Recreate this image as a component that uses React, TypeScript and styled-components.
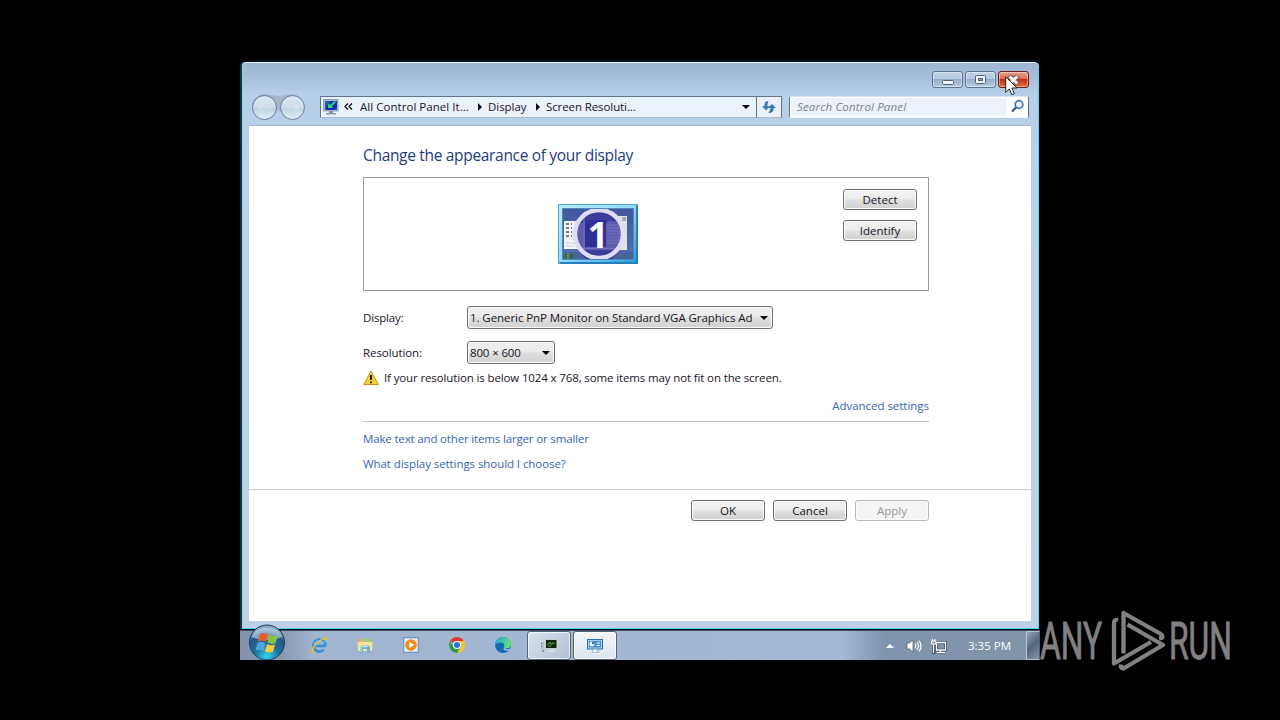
import { FC, ReactNode } from "react";
import styled, { createGlobalStyle } from "styled-components";

const GlobalStyle = createGlobalStyle`
  * { box-sizing: border-box; }
  body {
    margin: 0;
    background: #000;
    overflow: hidden;
    font-family: "Open Sans", "Noto Sans", sans-serif;
    font-size: 11.5px;
    color: #20141f;
  }
`;

const DisplayIcon: FC = () => (
  <svg width="16" height="16" viewBox="0 0 16 16">
    <rect x="0.5" y="0.5" width="14.5" height="11.5" fill="#a9bccb" stroke="#8fa3b2" />
    <rect x="2" y="2" width="12" height="9" fill="#0c2bc0" />
    <path d="M2 2h6L3 7v4h8l3-3v3H2z" fill="#175fb2" />
    <path d="M5 4v5h5L8.5 7.5 13 3l-1.5-1L7 6z" fill="#2edb4e" />
    <path d="M6 12h4v2h3v1.5H3V14h3z" fill="#8797a0" />
  </svg>
);

const Monitor: FC = () => (
  <svg width="80" height="60" viewBox="0 0 80 60">
    <defs>
      <linearGradient id="bezel" x1="0" y1="0" x2="1" y2="1">
        <stop offset="0" stopColor="#b4ecff" />
        <stop offset="0.5" stopColor="#93dbfc" />
        <stop offset="1" stopColor="#2b9de4" />
      </linearGradient>
      <linearGradient id="screen" x1="0" y1="0" x2="0" y2="1">
        <stop offset="0" stopColor="#4257a0" />
        <stop offset="1" stopColor="#5671ae" />
      </linearGradient>
      <clipPath id="screenClip">
        <rect x="5" y="5" width="70" height="50" />
      </clipPath>
    </defs>
    <rect width="80" height="60" rx="1" fill="#4aa5da" />
    <path d="M78 2h2v58H2v-2h76z" fill="#2580ba" />
    <rect x="1" y="1" width="77" height="57" fill="url(#bezel)" />
    <rect x="4" y="4" width="72" height="52" fill="#4f88b8" />
    <g clipPath="url(#screenClip)">
      <rect x="5" y="5" width="70" height="50" fill="url(#screen)" />
      <rect x="24" y="12" width="45" height="34" fill="#e0e2e4" />
      <path d="M64 13h4v4h-4z" fill="#a9a9b5" />
      <rect x="6" y="17" width="24" height="28" fill="#f3f4f4" />
      <path d="M8 20h3M8 24h3M8 28h3M8 32h3M13 20h1M13 24h1M13 28h1M13 32h1" stroke="#778" strokeWidth="2" />
      <path d="M8 39h10M8 42h8" stroke="#ccd" />
      <rect x="5" y="48" width="70" height="7" fill="#47639a" />
      <rect x="7" y="50" width="8" height="5" fill="#32684d" />
      <path d="M10 49v6" stroke="#b8a440" />
      <circle cx="41" cy="30" r="24" fill="#5f5cae" />
      <path d="M21 19a22 22 0 0 1 40 0zM21 46a22 22 0 0 0 40 0z" fill="#3d3c9a" />
      <rect x="27" y="16" width="21" height="27" fill="#302f96" />
      <path d="M49 18h13M49 21h13M49 24h14M49 27h14M49 30h14M49 33h14M49 36h13M49 39h12" stroke="#7770bf" />
      <path d="M26 14v30M24 44.500h34" stroke="#7770bf" />
      <circle cx="41" cy="30" r="24" fill="none" stroke="#dfddf3" strokeWidth="4.5" />
    </g>
    <text x="40" y="43.5" textAnchor="middle" fontFamily="Open Sans" fontWeight="700" fontSize="36" fill="#fff">1</text>
  </svg>
);

const StartOrb: FC = () => (
  <svg width="38" height="36" viewBox="0 0 38 36">
    <defs>
      <radialGradient id="orb" cx="0.5" cy="0.9" r="0.8">
        <stop offset="0" stopColor="#35d3ed" />
        <stop offset="0.45" stopColor="#1c6f9f" />
        <stop offset="0.8" stopColor="#28598a" />
        <stop offset="1" stopColor="#86a9c4" />
      </radialGradient>
    </defs>
    <circle cx="19" cy="18.5" r="17.5" fill="url(#orb)" stroke="#183c5d" />
    <path d="M4 13C7 1 31 1 34 13c-8 4-22 4-30 0z" fill="#d5e7f2" opacity="0.5" />
    <path d="M12 10c3-2 6-1 8 .5l-2 7.5c-3-1.500-5-1.800-8-.3z" fill="#ed5b25" />
    <path d="M21.500 11c3 1.500 5 1.500 8.500 0l-2.500 8c-3 1.500-5 1-8-.5z" fill="#87c441" />
    <path d="M9.500 19c3-1.500 5-1 8 .4l-2 7.600c-3-1.500-5-1.500-8-.2z" fill="#4aa6e5" />
    <path d="M19 20c3 1.500 5 1.500 8 .4l-2 7.300c-3 1.300-5 1-8-.5z" fill="#fbca2e" />
  </svg>
);

const ExplorerE: FC = () => (
  <svg width="18" height="18" viewBox="0 0 18 18">
    <path d="M4 10h11.500M15.300 10a6 6 0 1 0-1.500 3.600" fill="none" stroke="#2f93dd" strokeWidth="2.600" />
    <path d="M4 9a5.500 5.500 0 0 1 10-2" fill="none" stroke="#8bd0f6" />
    <path d="M1.500 17C0 15 3 9 8 5.500 12 2 16 .5 17 2c.6 1-.2 2.600-1 3.600C16.600 3 14 2.500 10 5.500c-4 3-7 7-6.500 9.500.2.900 1.500.8 3 .2C4.500 17 2.200 18 1.500 17z" fill="#edba35" />
  </svg>
);

const FolderIcon: FC = () => (
  <svg width="18" height="18" viewBox="0 0 18 18">
    <path d="M2 3h5l1 1.500h8V15H2z" fill="#d5bd65" />
    <path d="M8 2.500h7V7H8z" fill="#9dc98a" />
    <path d="M1.500 6h15L16 15H2z" fill="#f5e49a" />
    <path d="M4 17v-5q0-2.500 2.500-2.500h5Q14 9.500 14 12v5h-3v-4H7v4z" fill="#72b4cf" />
    <path d="M5 16v-4q0-1.500 1.500-1.500h5" fill="none" stroke="#c7eefa" />
  </svg>
);

const PlayerIcon: FC = () => (
  <svg width="18" height="18" viewBox="0 0 18 18">
    <rect x="1.500" y="1.500" width="15" height="15" fill="#c1d7e9" stroke="#6f9ac3" />
    <rect x="3" y="3" width="12" height="12" fill="#e7eff6" />
    <circle cx="9" cy="9" r="5.800" fill="#f58a16" />
    <path d="M7.300 5.800 12 9l-4.700 3.200z" fill="#fff" />
  </svg>
);

const ChromeIcon: FC = () => (
  <svg width="18" height="18" viewBox="0 0 18 18">
    <path d="M9 9 2.100 5A8 8 0 0 1 15.900 5z" fill="#e33b2e" />
    <path d="M9 5h6.900A8 8 0 0 1 9 17l3.500-6z" fill="#fcc31e" />
    <path d="M2.100 5A8 8 0 0 0 9 17l3.500-6H5.500z" fill="#299e4b" />
    <circle cx="9" cy="9" r="4" fill="#fff" />
    <circle cx="9" cy="9" r="3" fill="#2874e6" />
  </svg>
);

const EdgeIcon: FC = () => (
  <svg width="18" height="18" viewBox="0 0 18 18">
    <defs>
      <linearGradient id="edge" x1="0" y1="0" x2="1" y2="0.2">
        <stop offset="0" stopColor="#1fa8e0" />
        <stop offset="1" stopColor="#60df74" />
      </linearGradient>
    </defs>
    <circle cx="9" cy="9" r="8" fill="#1269b8" />
    <path d="M1 9C1 4.500 4.500 1 9 1s8 3.500 8 7c0 3-2 4.500-4.500 4.500S9.500 11.500 10 10.500c1-2-.5-4-3-4S2 7.500 1 9z" fill="url(#edge)" />
    <path d="M10.500 11.500c0 1.500 2.500 2.500 6 1.200l-1 1.600c-3 1-6 .2-6-2z" fill="#a9bedc" />
  </svg>
);

const TerminalIcon: FC = () => (
  <svg width="18" height="16" viewBox="0 0 18 16">
    <rect x="5" y="1" width="12.500" height="10" fill="#c7d2ce" />
    <rect x="6" y="2" width="10.500" height="8" fill="#10270f" />
    <path d="M7 6h2l1-2 1.500 3 1-2H15M8 8h3" fill="none" stroke="#5aa445" />
    <path d="M8 12h7v2H8z" fill="#d9dedf" />
    <path d="M1 4h3v7H1z" fill="#b7c2bd" />
    <path d="M1.500 5v1M1.500 8v1M3 12v2" stroke="#566" />
  </svg>
);

const ControlIcon: FC = () => (
  <svg width="18" height="16" viewBox="0 0 18 16">
    <rect x="1.500" y="1.500" width="15" height="9.500" fill="#438fca" stroke="#2c6da8" />
    <rect x="2.500" y="2.500" width="13" height="7.500" fill="none" stroke="#a4d3f0" />
    <circle cx="6" cy="6" r="2.500" fill="#e5f6ff" />
    <path d="M6 6V3.500A2.500 2.500 0 0 1 8.500 6z" fill="#2a72b1" />
    <path d="M10.500 5H14M10.500 7.500H14" stroke="#fff" />
    <path d="M7 11h4v2h2v1.500H6V13h1z" fill="#e6eef5" stroke="#8ba1b5" strokeWidth="0.600" />
  </svg>
);

const Watermark: FC = () => (
  <WatermarkSvg width="220" height="80" viewBox="0 0 220 80">
    <g fill="#818181" stroke="#818181" strokeWidth="0.900" fontFamily="Roboto" fontSize="51">
      <text x="4" y="52" textLength="62" lengthAdjust="spacingAndGlyphs">ANY</text>
      <text x="133" y="52" textLength="63" lengthAdjust="spacingAndGlyphs">RUN</text>
    </g>
    <g fill="none" stroke="#818181" strokeWidth="4.300" strokeLinejoin="round">
      <path d="M87.500 46.500V6L124 26.500q4 2.500 1.500 4.500l-2.500.500" />
      <path d="M91.500 17.500 127 38 87.500 61.500q-3-.5-2.500-4" />
      <path d="M82 13q-4-1-4 3v40.500L115 35" />
    </g>
  </WatermarkSvg>
);

interface ButtonProps {
  children: ReactNode;
  disabled?: boolean;
}

const PushButton: FC<ButtonProps> = ({ children, disabled }) => (
  <Button disabled={disabled}><Text $track={0.03}>{children}</Text></Button>
);

const App: FC = () => {
  return (
    <Stage>
      <GlobalStyle />
      <Desktop>
        <Window>
          <TitleBar>
            <Caption>
              <svg width="29" height="16"><rect x="9.500" y="8.500" width="11" height="4" rx="1" fill="#f4f4f4" stroke="#536175" /></svg>
            </Caption>
            <Caption>
              <svg width="29" height="16"><rect x="9.500" y="3.500" width="10" height="8" rx="1" fill="#f4f4f4" stroke="#536175" /><rect x="12.500" y="6.500" width="4" height="2" fill="#8aa0b8" stroke="#536175" /></svg>
            </Caption>
            <Caption $close>
              <svg width="29" height="16"><path d="m10 4 9 8m0-8-9 8" stroke="#70413f" strokeWidth="5" /><path d="m10.500 4.500 8 7m0-7-8 7" stroke="#f5f3f3" strokeWidth="3" /></svg>
            </Caption>
          </TitleBar>
          <NavBar>
            <NavButtons width="56" height="28" viewBox="0 0 56 28">
              <defs>
                <linearGradient id="nav" x1="0" y1="0" x2="0" y2="1">
                  <stop offset="0" stopColor="#dce7f1" />
                  <stop offset="0.48" stopColor="#cfdeeb" />
                  <stop offset="0.52" stopColor="#bed2e2" />
                  <stop offset="1" stopColor="#dff1fa" />
                </linearGradient>
              </defs>
              <path d="M2 13A13 13 0 0 1 14 1q7 1 14 2 7-1 14-2a13 13 0 0 1 12 13L42 25 28 17 14 25z" fill="#9fb2c5" opacity="0.8" />
              <circle cx="14.500" cy="14.500" r="12" fill="url(#nav)" stroke="#667e96" />
              <circle cx="42.500" cy="14.500" r="12" fill="url(#nav)" stroke="#667e96" />
              <path d="M20.500 14.500H8.500m5-4-5 4 5 4M36.500 14.500h12m-5-4 5 4-5 4" fill="none" stroke="#dfe9f2" strokeWidth="2" opacity="0.5" />
            </NavButtons>
            <Address>
              <DisplayIcon />
              <Chevrons width="9" height="7"><path d="M4 .5 1 3.500l3 3m4-6-3 3 3 3" fill="none" stroke="#111" strokeWidth="1.300" /></Chevrons>
              <Crumb $width={118}><Text $track={0.04}>All Control Panel It...</Text></Crumb>
              <CrumbArrow />
              <Crumb $width={48}><Text $track={-0.05}>Display</Text></Crumb>
              <CrumbArrow />
              <Crumb $width={196}><Text $track={-0.1}>Screen Resoluti...</Text></Crumb>
              <DownArrow />
            </Address>
            <Refresh>
              <svg width="18" height="16" viewBox="0 0 18 16">
                <path d="M8.500 2Q4.500 2 4.500 6v1H2l4 4.500L10 7H7.500V5z" fill="#3f78ae" />
                <path d="M8.500 14q5 0 5-4V9H16l-4-4-4 4h2.500v1z" fill="#3475b4" />
              </svg>
            </Refresh>
            <Search>
              <Text $track={0.15}>Search Control Panel</Text>
              <svg width="15" height="15" viewBox="0 0 15 15"><circle cx="9" cy="5.500" r="3.800" fill="#eff8ff" stroke="#3979b5" strokeWidth="1.700" /><path d="m6 8.500-4 4" stroke="#315e91" strokeWidth="2.400" /></svg>
            </Search>
          </NavBar>
          <Client>
            <Content>
              <Heading>Change the appearance of your display</Heading>
              <Preview>
                <MonitorSlot><Monitor /></MonitorSlot>
                <PreviewActions>
                  <PushButton>Detect</PushButton>
                  <PushButton>Identify</PushButton>
                </PreviewActions>
              </Preview>
              <Field $top={15}>
                <Text $track={-0.16}>Display:</Text>
                <Select $width={306}><Text $track={-0.07}>1. Generic PnP Monitor on Standard VGA Graphics Ad</Text><DownArrow /></Select>
              </Field>
              <Field $top={12}>
                <Text $track={-0.08}>Resolution:</Text>
                <Select $width={88}><Text $track={-0.14}>800 × 600</Text><DownArrow /></Select>
              </Field>
              <Warning>
                <svg width="16" height="16" viewBox="0 0 16 16"><path d="M8 1.200 15.300 14.500H.7z" fill="#f8d42b" stroke="#c29a16" strokeLinejoin="round" /><path d="M8 5v5M8 11.500v1.800" stroke="#111" strokeWidth="1.900" /></svg>
                <Text $track={-0.13}>If your resolution is below 1024 x 768, some items may not fit on the screen.</Text>
              </Warning>
              <Advanced><Link><Text $track={-0.03}>Advanced settings</Text></Link></Advanced>
              <Links>
                <Link><Text $track={-0.16}>Make text and other items larger or smaller</Text></Link>
                <Link><Text $track={-0.07}>What display settings should I choose?</Text></Link>
              </Links>
            </Content>
            <Footer>
              <PushButton>OK</PushButton>
              <PushButton>Cancel</PushButton>
              <PushButton disabled>Apply</PushButton>
            </Footer>
          </Client>
        </Window>
        <Taskbar>
          <OrbSlot><StartOrb /></OrbSlot>
          <Launcher><ExplorerE /></Launcher>
          <Launcher><FolderIcon /></Launcher>
          <Launcher><PlayerIcon /></Launcher>
          <Launcher><ChromeIcon /></Launcher>
          <Launcher><EdgeIcon /></Launcher>
          <Tasks>
            <TaskButton><TerminalIcon /></TaskButton>
            <TaskButton $active><ControlIcon /></TaskButton>
          </Tasks>
          <Tray>
            <TrayArrow width="8" height="4"><path d="M0 4 4 0l4 4z" fill="#fff" /></TrayArrow>
            <svg width="16" height="14" viewBox="0 0 16 14"><path d="M1 4h2.500L7 .8v12.400L3.500 10H1z" fill="#fff" stroke="#4d5968" strokeWidth="0.700" /><path d="M9 4.500q1.500 2.500 0 5M11 3q3 4 0 8M13 1.500q4 5.500 0 11" fill="none" stroke="#fff" strokeWidth="1.200" /></svg>
            <svg width="16" height="16" viewBox="0 0 16 16"><path d="M5.500 4.500h9v7.500h-9zM9.500 12v2.500M6 14.500h8M2.500 6v8.500h2" fill="none" stroke="#2e3c4c" strokeWidth="2.600" /><path d="M5.500 4.500h9v7.500h-9zM9.500 12v2.500M6 14.500h8M2.500 6v9" fill="none" stroke="#fff" strokeWidth="1.300" /><path d="M.5 3h4.500v3H.5zM1.500 1v2M4 1v2" fill="#8a9bb0" stroke="#fff" /></svg>
            <Clock>3:35 PM</Clock>
            <ShowDesktop />
          </Tray>
        </Taskbar>
      </Desktop>
      <Watermark />
      <Cursor width="13" height="20" viewBox="0 0 13 20"><path d="M.7.8v15.500l3.600-3.400 2.500 5.800 2.600-1.100-2.500-5.600H12z" fill="#fff" stroke="#222" /></Cursor>
    </Stage>
  );
};

const Stage = styled.div`
  position: relative;
  width: 1280px;
  height: 720px;
  padding: 60px 240px;
  background: #000;
`;

const Desktop = styled.div`
  width: 800px;
  height: 600px;
  display: flex;
  flex-direction: column;
`;

const Text = styled.span<{ $track?: number }>`
  letter-spacing: ${(p) => p.$track ?? 0}px;
  white-space: nowrap;
`;

const Window = styled.div`
  height: 570px;
  display: flex;
  flex-direction: column;
  padding: 1px 8px 8px 7px;
  border: solid #03101c;
  border-width: 2px 1px 1px 2px;
  border-left-color: #0f3145;
  border-radius: 6px 6px 0 0;
  background: linear-gradient(#9bb5d1 0, #a3bbd6 10px, #b7cee9 32px, #b9d1ea 100px, #bfd1e7 100%);
  box-shadow: inset 0 1px #e9f5fb, inset 1px 0 #7fe2f1, inset -1px -1px #4fd8e9;
`;

const TitleBar = styled.div`
  height: 31px;
  display: flex;
  justify-content: flex-end;
  gap: 2px;
  padding: 8px 2px 0 0;
`;

const Caption = styled.div<{ $close?: boolean }>`
  width: 31px;
  height: 17px;
  border: 1px solid ${(p) => (p.$close ? "#6b2022" : "#5f758e")};
  border-radius: 3px;
  box-shadow: inset 0 0 0 1px rgba(255, 255, 255, 0.4);
  background: ${(p) =>
    p.$close
      ? "linear-gradient(#eba08c, #dc6b50 47%, #c52c0c 50%, #e97035)"
      : "linear-gradient(#c2d4e7, #b3c9df 47%, #93adc8 50%, #b5cce3)"};

  svg {
    display: block;
  }
`;

const NavBar = styled.div`
  height: 32px;
  display: flex;
  align-items: flex-start;
  padding: 2px 2px 0 1px;
  border-bottom: 1px solid #a1b9d0;
`;

const NavButtons = styled.svg`
  margin-top: -3px;
`;

const Address = styled.div`
  width: 437px;
  height: 22px;
  margin-left: 14px;
  padding: 0 3px 1px 2px;
  display: flex;
  align-items: center;
  border: 1px solid #63758a;
  border-bottom-color: #aabbcb;
  background: #eaf2fb;
`;

const Chevrons = styled.svg`
  margin: 0 7px 0 5px;
`;

const Crumb = styled.div<{ $width: number }>`
  width: ${(p) => p.$width}px;
  line-height: 18px;
`;

const CrumbArrow = styled.i`
  border-left: 4px solid #111;
  border-top: 4px solid transparent;
  border-bottom: 4px solid transparent;
  margin-right: 6px;
`;

const DownArrow = styled.i`
  flex: none;
  border-top: 4px solid #000;
  border-left: 4px solid transparent;
  border-right: 4px solid transparent;
`;

const Refresh = styled.div`
  width: 25px;
  height: 22px;
  display: flex;
  align-items: center;
  justify-content: center;
  border: 1px solid #63758a;
  border-left: 0;
  border-bottom-color: #aabbcb;
  background: #e9f2fb;
`;

const Search = styled.div`
  width: 240px;
  height: 22px;
  margin-left: 7px;
  padding: 0 3px 1px 7px;
  display: flex;
  align-items: center;
  justify-content: space-between;
  border: 1px solid #63758a;
  border-top-color: #d5e4f0;
  border-bottom-color: #f2f7fb;
  border-radius: 2px;
  box-shadow: inset 0 0 0 1px #fff;
  background: linear-gradient(90deg, #eaf2fb 216px, #fff 216px);
  color: #7c8490;
  font-style: italic;
`;

const Client = styled.div`
  flex: 1;
  background: #fff;
`;

const Content = styled.div`
  height: 364px;
  padding: 18px 102px 0 114px;
  border-bottom: 1px solid #cacaca;
`;

const Heading = styled.h1`
  margin: 0 0 10px;
  height: 23px;
  line-height: 23px;
  font-size: 15.5px;
  font-weight: 400;
  letter-spacing: -0.32px;
  color: #1c3b86;
  white-space: nowrap;
`;

const Preview = styled.div`
  height: 114px;
  display: flex;
  justify-content: space-between;
  padding: 11px 11px 0 0;
  border: 1px solid #9b9b9f;
`;

const MonitorSlot = styled.div`
  padding: 15px 0 0 194px;
`;

const PreviewActions = styled.div`
  display: flex;
  flex-direction: column;
  gap: 10px;
`;

const Button = styled.button`
  width: 74px;
  height: 21px;
  padding: 1px 0 0;
  border: 1px solid ${(p) => (p.disabled ? "#b8b8b8" : "#707070")};
  border-radius: 3px;
  background: ${(p) =>
    p.disabled ? "#f4f4f4" : "linear-gradient(#f3f3f3, #ececec 48%, #dfdfdf 52%, #d0d0d0)"};
  box-shadow: inset 0 0 0 1px #fafafa;
  font: inherit;
  line-height: 18px;
  color: ${(p) => (p.disabled ? "#96979a" : "#20141f")};
`;

const Field = styled.div<{ $top: number }>`
  height: 23px;
  margin-top: ${(p) => p.$top}px;
  display: grid;
  grid-template-columns: 104px auto;
  align-items: center;
  justify-content: start;
  line-height: 19px;
`;

const Select = styled.div<{ $width: number }>`
  width: ${(p) => p.$width}px;
  height: 23px;
  padding: 0 4px 0 2px;
  display: flex;
  align-items: center;
  justify-content: space-between;
  border: 1px solid #707070;
  border-radius: 3px;
  background: linear-gradient(#f1f1f1, #e9e9e9 48%, #dedede 52%, #d2d2d2);
  box-shadow: inset 0 0 0 1px #fafafa;
`;

const Warning = styled.div`
  height: 18px;
  margin-top: 5px;
  display: flex;
  align-items: center;
  gap: 5px;
  line-height: 18px;
`;

const Link = styled.a`
  display: block;
  height: 18px;
  line-height: 18px;
  color: #3466b8;
`;

const Advanced = styled.div`
  height: 35px;
  padding-top: 10px;
  display: flex;
  justify-content: flex-end;
  border-bottom: 1px solid #c5c5c5;
`;

const Links = styled.div`
  display: flex;
  flex-direction: column;
  gap: 7px;
  padding-top: 8px;
`;

const Footer = styled.div`
  display: flex;
  justify-content: flex-end;
  gap: 8px;
  padding: 10px 102px 0 0;
`;

const Taskbar = styled.div`
  height: 30px;
  display: flex;
  align-items: center;
  border-top: 1px solid #3f4c5d;
  background: linear-gradient(90deg, #8294ad 0, #8798b0 40px, #a1b5d0 75px, #a5b9d6 600px, #8094ad 645px, #8194a8 100%);
`;

const OrbSlot = styled.div`
  width: 56px;
  height: 29px;
  padding-left: 8px;
  display: flex;
  align-items: flex-end;
  z-index: 1;

  svg {
    flex: none;
  }
`;

const Launcher = styled.div`
  width: 46px;
  height: 20px;
  display: flex;
  justify-content: center;
`;

const Tasks = styled.div`
  display: flex;
  gap: 2px;
  margin-left: 1px;
`;

const TaskButton = styled.div<{ $active?: boolean }>`
  width: 44px;
  height: 29px;
  display: flex;
  align-items: center;
  justify-content: center;
  border: 1px solid #53657d;
  border-radius: 3px;
  box-shadow: inset 0 0 0 1px rgba(255, 255, 255, 0.7);
  background: ${(p) => (p.$active ? "linear-gradient(#f3f6fa, #dce5ef)" : "linear-gradient(135deg, #dae2ed, #b0c1d6)")};
`;

const Tray = styled.div`
  height: 29px;
  margin-left: auto;
  display: flex;
  align-items: center;
  gap: 9px;
`;

const TrayArrow = styled.svg`
  margin-right: 3px;
`;

const Clock = styled.div`
  width: 50px;
  margin-left: 12px;
  line-height: 18px;
  white-space: nowrap;
  color: #fff;
`;

const ShowDesktop = styled.div`
  width: 14px;
  height: 29px;
  margin-left: -1px;
  border: 1px solid #b6c2cf;
  border-right-color: #53616e;
  background: linear-gradient(135deg, #93a4b5, #53677b 50%, #8698aa);
`;

const WatermarkSvg = styled.svg`
  position: absolute;
  left: 1036px;
  top: 607px;
  overflow: visible;
`;

const Cursor = styled.svg`
  position: absolute;
  left: 1005px;
  top: 76px;
`;

export default App;
